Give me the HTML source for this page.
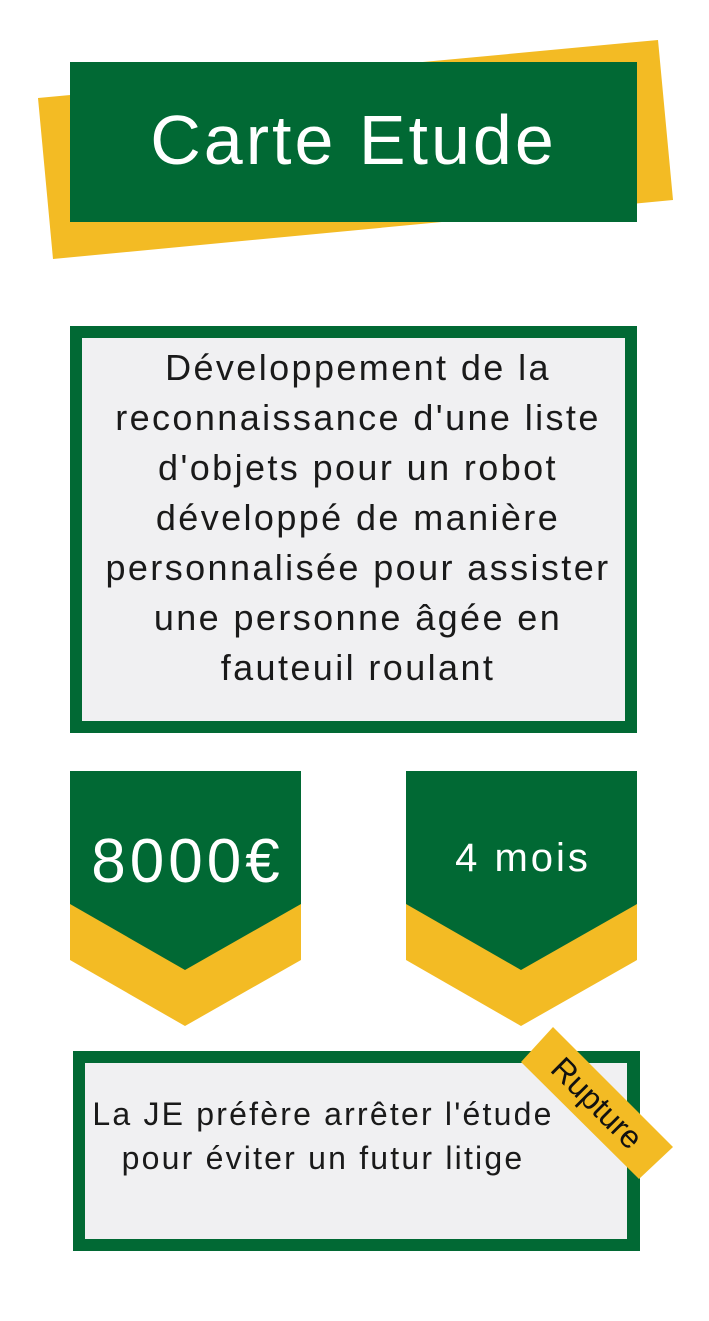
<!DOCTYPE html>
<html><head><meta charset="utf-8"><style>
html,body{margin:0;padding:0;background:#fff;}
body{width:709px;height:1321px;position:relative;overflow:hidden;font-family:"Liberation Sans",sans-serif;}
.abs{position:absolute;}
.t{color:#1a1a1a;text-align:center;font-size:36px;letter-spacing:2.4px;line-height:50px;}
</style></head><body>
<svg class="abs" style="left:0;top:0" width="709" height="1321">
<polygon points="38,98 658,40 673,200 53,259" fill="#f3bb24"/>
<rect x="70" y="62" width="567" height="160" fill="#016934"/>
<rect x="70" y="326" width="567" height="407" fill="#016934"/>
<rect x="82" y="338" width="543" height="383" fill="#f0f0f2"/>
<polygon points="70,771 301,771 301,960 185,1026 70,960" fill="#f3bb24"/>
<polygon points="70,771 301,771 301,904 185,970 70,904" fill="#016934"/>
<polygon points="406,771 637,771 637,960 521,1026 406,960" fill="#f3bb24"/>
<polygon points="406,771 637,771 637,904 521,970 406,904" fill="#016934"/>
<rect x="73" y="1051" width="567" height="200" fill="#016934"/>
<rect x="85" y="1063" width="542" height="176" fill="#f0f0f2"/>
<polygon points="553,1027 673,1147 639,1179 521,1062" fill="#f3bb24"/>
</svg>
<div class="abs" style="left:70px;top:100px;width:567px;text-align:center;color:#fff;font-size:70px;letter-spacing:3px;line-height:80px;">Carte Etude</div>
<div class="abs t" style="left:82px;top:343px;width:552px;">Développement de la<br>reconnaissance d'une liste<br>d'objets pour un robot<br>développé de manière<br>personnalisée pour assister<br>une personne âgée en<br>fauteuil roulant</div>
<div class="abs" style="left:70px;top:827px;width:235px;text-align:center;color:#fff;font-size:62px;line-height:70px;letter-spacing:4px;">8000€</div>
<div class="abs" style="left:406px;top:835px;width:234px;text-align:center;color:#fff;font-size:40px;line-height:46px;letter-spacing:3px;">4 mois</div>
<div class="abs t" style="left:85px;top:1092px;width:476px;font-size:32px;line-height:44px;letter-spacing:2.2px;">La JE préfère arrêter l'étude<br>pour éviter un futur litige</div>
<div class="abs" style="left:513px;top:1080px;width:168px;height:46px;line-height:46px;text-align:center;font-size:32px;color:#111;transform:rotate(45deg);">Rupture</div>
</body></html>
